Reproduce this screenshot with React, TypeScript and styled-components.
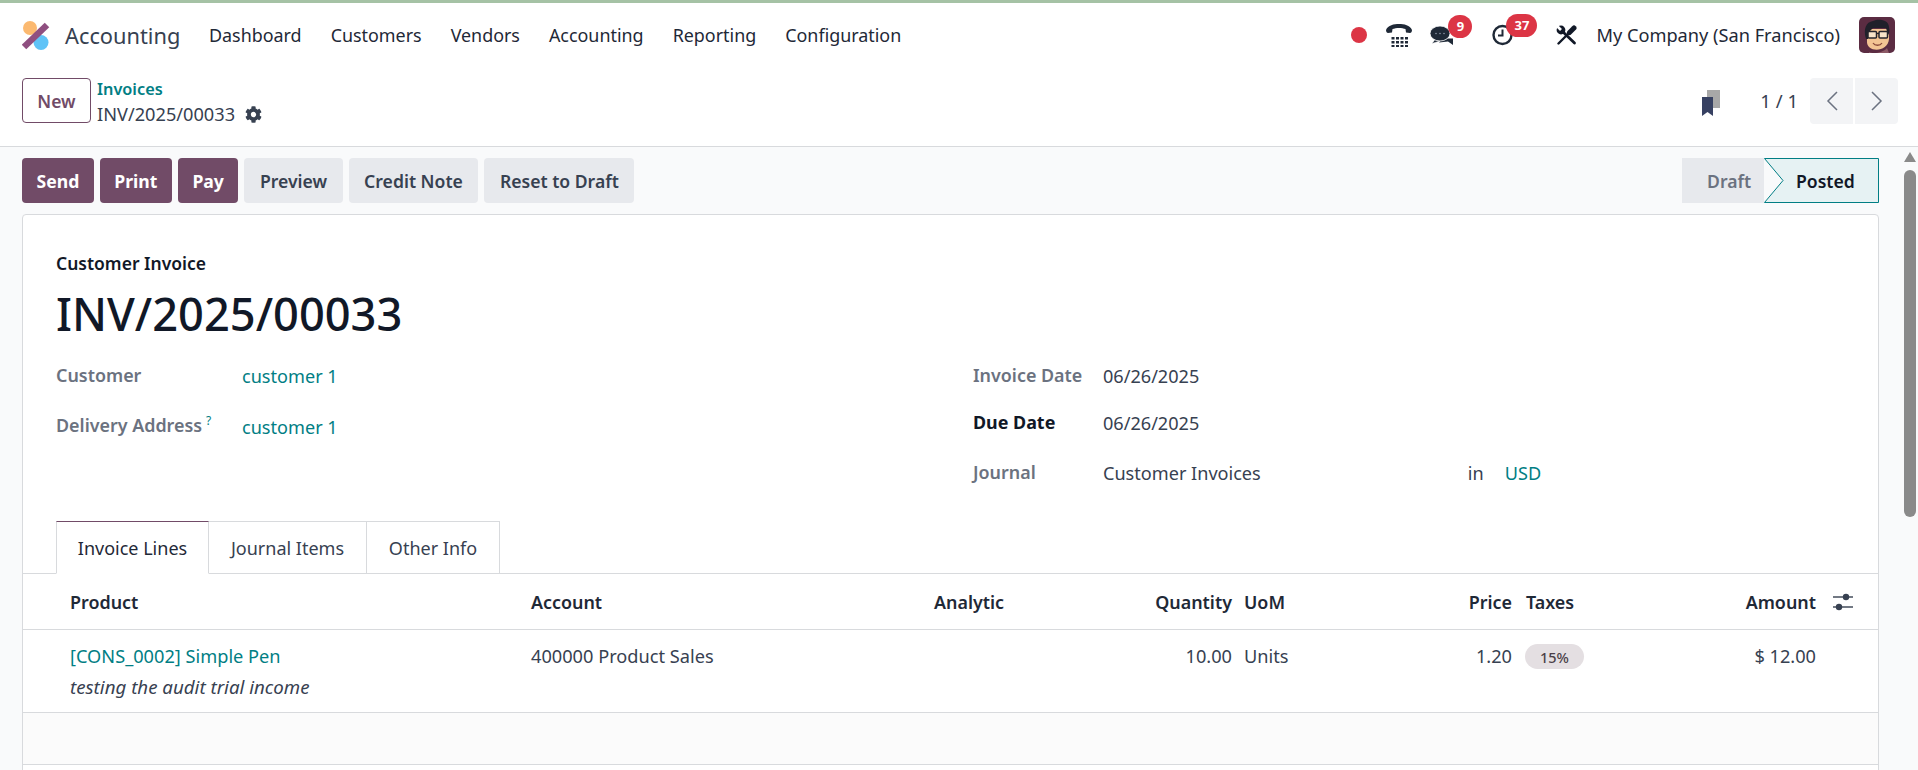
import React from 'react'
import styled, { createGlobalStyle } from 'styled-components'
import { FaCog } from 'react-icons/fa'

const GlobalStyle = createGlobalStyle`
    html, body {
        margin: 0;
        height: 100%;
        overflow: hidden;
        background: #fff;
    }
    body {
        font-family: "Noto Sans", "Open Sans", sans-serif;
        font-size: 18px;
        color: #374151;
    }
    * {
        box-sizing: border-box;
    }
`

const Page = styled.div`
    display: flex;
    flex-direction: column;
    height: 770px;
    overflow: hidden;
    border-top: 3px solid #a5c2a5;
`
const NavBar = styled.header`
    display: flex;
    align-items: center;
    height: 66px;
    flex-shrink: 0;
    padding: 0 23px 2px 22px;
`
const Brand = styled.div`
    display: flex;
    align-items: center;
    gap: 15px;
    width: 187px;
    font-size: 21.8px;
    color: #374151;
`
const NavMenu = styled.nav`
    display: flex;
    gap: 29px;
`
const NavItem = styled.span`
    font-size: 17.9px;
    color: #1f2937;
`
const Systray = styled.div`
    display: flex;
    align-items: center;
    margin-left: auto;
`
const TrayItem = styled.div<{ $left: number, $width: number }>`
    position: relative;
    display: flex;
    align-items: center;
    justify-content: center;
    width: ${(props) => props.$width}px;
    margin-left: ${(props) => props.$left}px;
`
const RecordDot = styled.span`
    width: 16px;
    height: 16px;
    border-radius: 50%;
    background: #dc3545;
`
const Badge = styled.span<{ $left: number, $width: number }>`
    position: absolute;
    top: -10px;
    left: ${(props) => props.$left}px;
    width: ${(props) => props.$width}px;
    height: 23px;
    border-radius: 12px;
    background: #dc3545;
    color: #fff;
    font-size: 13px;
    font-weight: 700;
    line-height: 23px;
    text-align: center;
`
const CompanyName = styled.span`
    margin-left: 19px;
    font-size: 18.2px;
    color: #1f2937;
    white-space: nowrap;
`
const AvatarWrap = styled.div`
    display: flex;
    margin-left: 19px;
`

const ControlPanel = styled.section`
    display: flex;
    justify-content: space-between;
    height: 78px;
    flex-shrink: 0;
    padding: 9px 20px 0 22px;
    border-bottom: 1px solid #d8dadd;
`
const PanelLeft = styled.div`
    display: flex;
    gap: 6px;
`
const NewButton = styled.button`
    width: 69px;
    height: 45px;
    padding: 0;
    border: 1px solid #714b67;
    border-radius: 4px;
    background: #fff;
    color: #714b67;
    font: 600 17.5px "Noto Sans", sans-serif;
`
const Breadcrumb = styled.div`
    display: flex;
    flex-direction: column;
    margin-top: -1px;
    line-height: 25px;
`
const CrumbLink = styled.span`
    color: #017e84;
    font-weight: 600;
    font-size: 16.3px;
`
const CrumbCurrent = styled.span`
    display: flex;
    align-items: center;
    gap: 10px;
    font-size: 18.2px;
    color: #374151;
    svg {
        width: 17px;
        height: 17px;
    }
`
const PanelRight = styled.div`
    display: flex;
    align-items: flex-start;
`
const BookmarkWrap = styled.div`
    display: flex;
    margin: 12px 40px 0 0;
`
const PagerText = styled.span`
    margin-right: 12px;
    line-height: 46px;
    font-size: 18.5px;
`
const PagerButton = styled.button<{ $first?: boolean, $gap?: number }>`
    display: flex;
    align-items: center;
    justify-content: center;
    width: 43px;
    height: 46px;
    margin-left: ${(props) => props.$gap || 0}px;
    padding: 0;
    border: 0;
    background: #f3f4f6;
    border-radius: ${(props) => (props.$first ? '4px 0 0 4px' : '0 4px 4px 0')};
`

const Body = styled.div`
    display: flex;
    flex: 1;
    min-height: 0;
    background: #f9fafb;
`
const Main = styled.main`
    flex: 1;
    min-width: 0;
    padding: 11px 22px 0 22px;
`
const ActionRow = styled.div`
    display: flex;
    justify-content: space-between;
    height: 45px;
    margin-bottom: 11px;
`
const Actions = styled.div`
    display: flex;
    gap: 6px;
`
const ActionButton = styled.button<{ $primary?: boolean }>`
    height: 45px;
    padding: 1px ${(props) => (props.$primary ? 14.5 : 15.5)}px 0;
    border: 0;
    border-radius: 4px;
    background: ${(props) => (props.$primary ? '#714b67' : '#e7e9ed')};
    color: ${(props) => (props.$primary ? '#fff' : '#374151')};
    font: ${(props) => (props.$primary ? 700 : 600)} 17.6px "Noto Sans", sans-serif;
`
const StatusBar = styled.div`
    display: flex;
    height: 45px;
`
const StatusDraft = styled.div`
    width: 82px;
    padding-left: 25px;
    background: #e7e9ed;
    color: #6b7280;
    font-weight: 600;
    font-size: 17.6px;
    line-height: 46px;
`
const StatusPosted = styled.div`
    position: relative;
    width: 115px;
    padding-left: 32px;
    color: #111827;
    font-weight: 600;
    font-size: 17.6px;
    line-height: 46px;
    svg {
        position: absolute;
        left: 0;
        top: 0;
    }
    span {
        position: relative;
    }
`

const Sheet = styled.article`
    background: #fff;
    border: 1px solid #d8dadd;
    border-radius: 4px;
    height: 600px;
`
const SheetHead = styled.div`
    padding: 36px 33px 0;
`
const DocType = styled.div`
    font-size: 17.5px;
    font-weight: 600;
    color: #111827;
    line-height: 24px;
`
const DocTitle = styled.h1`
    margin: 8px 0 0;
    font-size: 45.2px;
    font-weight: 500;
    line-height: 62px;
    color: #111827;
`
const FieldColumns = styled.div`
    display: grid;
    grid-template-columns: 917px 1fr;
    height: 170px;
    margin-top: 6px;
`
const FieldRow = styled.div<{ $height: number }>`
    display: flex;
    align-items: center;
    height: ${(props) => props.$height}px;
    font-size: 18.1px;
`
const FieldLabel = styled.span<{ $width: number, $strong?: boolean, $raised?: boolean }>`
    flex-shrink: 0;
    width: ${(props) => props.$width}px;
    margin-bottom: ${(props) => (props.$raised ? 4 : 0)}px;
    font-size: 17.9px;
    font-weight: ${(props) => (props.$strong ? 700 : 600)};
    color: ${(props) => (props.$strong ? '#111827' : '#6b7280')};
`
const Help = styled.sup`
    margin-left: 4px;
    font-size: 12px;
    font-weight: 400;
    color: #017e84;
`
const FieldValue = styled.span`
    padding-top: 1px;
    color: #374151;
`
const LinkValue = styled(FieldValue)`
    color: #017e84;
`
const InWord = styled(FieldValue)`
    width: 37px;
    margin-left: 207px;
`

const TabRow = styled.div`
    display: flex;
    height: 53px;
    padding-left: 33px;
    border-bottom: 1px solid #d8dadd;
`
const Tab = styled.div<{ $active?: boolean, $width: number }>`
    width: ${(props) => props.$width}px;
    height: 53px;
    border: 1px solid #d8dadd;
    border-left-width: ${(props) => (props.$active ? 1 : 0)}px;
    border-top-color: ${(props) => (props.$active ? '#714b67' : '#d8dadd')};
    border-bottom-color: ${(props) => (props.$active ? '#fff' : '#d8dadd')};
    color: ${(props) => (props.$active ? '#1f2937' : '#374151')};
    line-height: 52px;
    text-align: center;
`

const GRID = '461px 403px 166px 132px 143px 137px 168px 136px 1fr'
const HeaderRow = styled.div`
    display: grid;
    grid-template-columns: ${GRID};
    align-items: center;
    height: 56px;
    padding: 1px 0 0 47px;
    border-bottom: 1px solid #d8dadd;
    font-size: 17.9px;
    font-weight: 600;
    color: #1f2937;
`
const LineRow = styled.div`
    display: grid;
    grid-template-columns: ${GRID};
    height: 83px;
    padding: 14px 0 0 47px;
    border-bottom: 1px solid #d8dadd;
    font-size: 18.2px;
    line-height: 25px;
`
const FillerRow = styled.div`
    height: 52px;
    background: #fbfbfb;
    border-bottom: 1px solid #d8dadd;
`
const Cell = styled.div<{ $right?: boolean, $pad?: number }>`
    text-align: ${(props) => (props.$right ? 'right' : 'left')};
    padding-left: ${(props) => props.$pad || 0}px;
`
const IconCell = styled(Cell)`
    display: flex;
`
const ProductLink = styled.div`
    color: #017e84;
`
const LineNote = styled.div`
    margin-top: 5px;
    font-size: 18.7px;
    font-style: italic;
    color: #374151;
`
const TaxPill = styled.span`
    display: inline-block;
    width: 59px;
    height: 25px;
    margin-top: -1px;
    border-radius: 13px;
    background: #e4dfe2;
    color: #4b3f48;
    font-size: 14.5px;
    font-weight: 500;
    line-height: 27px;
    text-align: center;
`

const ScrollBar = styled.aside`
    display: flex;
    flex-direction: column;
    align-items: center;
    width: 17px;
    padding-top: 5px;
    flex-shrink: 0;
`
const ScrollArrow = styled.span`
    width: 0;
    height: 0;
    border-left: 6px solid transparent;
    border-right: 6px solid transparent;
    border-bottom: 10px solid #8a8a8a;
`
const ScrollThumb = styled.span`
    width: 12px;
    height: 347px;
    margin-top: 8px;
    border-radius: 6px;
    background: #8a8a8a;
`

const Logo = () => (
    <svg width="28" height="30" viewBox="0 0 28 30">
        <circle cx="8" cy="8" r="7" fill="#fbb970" />
        <circle cx="19" cy="22.5" r="7.5" fill="#5fc3f7" />
        <path d="M2 27 L25 5" stroke="#8f4f80" strokeWidth="6.5" />
    </svg>
)
const PhoneIcon = () => (
    <svg width="26" height="23" viewBox="0 0 26 23" fill="#1f2937">
        <path d="M0 6 C2 1 8 0 13 0 C18 0 24 1 26 6 C26 8 25 9 24 9 L20 8.5 L19.5 5 C16 3.5 10 3.5 6.5 5 L6 8.5 L2 9 C1 9 0 8 0 6 Z" />
        {[5.5, 10, 14.5, 19].map((x) => [13, 17, 21].map((y) => (
            <rect key={`${x}-${y}`} x={x} y={y} width="3" height="2.5" />
        )))}
    </svg>
)
const ChatIcon = () => (
    <svg width="26" height="21" viewBox="0 0 24 20">
        <path d="M12 13 L23 13 L23 19.5 L18 16 L9 17 Z" fill="#1f2937" />
        <path d="M5 14 L2 18 L10 15.5 Z" fill="#1f2937" stroke="#fff" strokeWidth="0.5" />
        <ellipse cx="10" cy="8" rx="10" ry="7.5" fill="#1f2937" stroke="#fff" strokeWidth="0.8" />
        <circle cx="6" cy="8" r="0.8" fill="#8b95a5" />
        <circle cx="10" cy="8" r="0.8" fill="#8b95a5" />
        <circle cx="14" cy="8" r="0.8" fill="#8b95a5" />
    </svg>
)
const ClockIcon = () => (
    <svg width="22" height="22" viewBox="0 0 21 21" fill="none" stroke="#1f2937">
        <circle cx="10.5" cy="10.5" r="9" strokeWidth="2.4" />
        <path d="M10.5 5 V11 H6" strokeWidth="2" />
    </svg>
)
const ToolsIcon = () => (
    <svg width="21" height="20" viewBox="0 0 21 20" fill="none" stroke="#111827">
        <path d="M6 6 L18.5 18" strokeWidth="2.8" strokeLinecap="round" />
        <circle cx="5" cy="5" r="4.4" fill="#111827" stroke="none" />
        <path d="M1 1 L5 5" stroke="#fff" strokeWidth="2.6" />
        <path d="M2.5 18.5 L13 8" strokeWidth="2.4" strokeLinecap="round" />
        <path d="M13.5 7.5 L18 3" strokeWidth="5" strokeLinecap="round" />
    </svg>
)
const Avatar = () => (
    <svg width="36" height="36" viewBox="0 0 36 36">
        <rect width="36" height="36" rx="5" fill="#5b2c42" />
        <path d="M8 24 C7 36 29 36 30 22 L30 12 L8 12 Z" fill="#f3c493" />
        <path d="M10 35 C14 37 24 36 28 31 L30 36 L10 36 Z" fill="#8d5a66" />
        <path d="M7 22 C4 12 7 5 14 4 C20 1 30 3 30 10 C31 14 30 17 29 18 L27 11 L14 11 L10 15 L9 22 Z" fill="#20202a" />
        <rect x="9" y="14.5" width="8.5" height="6.5" rx="1" fill="#f7e3c9" stroke="#24242c" strokeWidth="1.5" />
        <rect x="20" y="14.5" width="8.5" height="6.5" rx="1" fill="#f7e3c9" stroke="#24242c" strokeWidth="1.5" />
        <path d="M17 16.5 H20" stroke="#24242c" strokeWidth="1.2" />
        <path d="M14 26 C16 29 21 29 23 26" fill="none" stroke="#8a4a3a" strokeWidth="1.3" />
    </svg>
)
const BookmarkIcon = () => (
    <svg width="18" height="26" viewBox="0 0 18 26">
        <path d="M5 0 H18 V18 H5 Z" fill="#a8a8a8" />
        <path d="M0 7 H11 V26 L5.5 22 L0 26 Z" fill="#374162" />
    </svg>
)
const Chevron = ({ left }: { left?: boolean }) => (
    <svg width="12" height="20" viewBox="0 0 12 20" fill="none" stroke="#6b7280" strokeWidth="1.5">
        <path d={left ? 'M11 1 L2 10 L11 19' : 'M1 1 L10 10 L1 19'} />
    </svg>
)
const SlidersIcon = () => (
    <svg width="20" height="18" viewBox="0 0 20 18" fill="#374151">
        <rect x="0" y="3.3" width="20" height="1.4" />
        <rect x="0" y="13.3" width="20" height="1.4" />
        <circle cx="13" cy="4" r="3.2" />
        <circle cx="6" cy="14" r="3.2" />
    </svg>
)

const menu = ['Dashboard', 'Customers', 'Vendors', 'Accounting', 'Reporting', 'Configuration']
const actions = [
    { label: 'Send', primary: true },
    { label: 'Print', primary: true },
    { label: 'Pay', primary: true },
    { label: 'Preview' },
    { label: 'Credit Note' },
    { label: 'Reset to Draft' },
]

export default function App() {
    return (
        <Page>
            <GlobalStyle />
            <NavBar>
                <Brand>
                    <Logo />
                    Accounting
                </Brand>
                <NavMenu>
                    {menu.map((item) => <NavItem key={item}>{item}</NavItem>)}
                </NavMenu>
                <Systray>
                    <TrayItem $left={0} $width={16}><RecordDot /></TrayItem>
                    <TrayItem $left={19} $width={26}><PhoneIcon /></TrayItem>
                    <TrayItem $left={18} $width={24}>
                        <ChatIcon />
                        <Badge $left={18} $width={24}>9</Badge>
                    </TrayItem>
                    <TrayItem $left={38} $width={21}>
                        <ClockIcon />
                        <Badge $left={14} $width={31}>37</Badge>
                    </TrayItem>
                    <TrayItem $left={43} $width={21}><ToolsIcon /></TrayItem>
                    <CompanyName>My Company (San Francisco)</CompanyName>
                    <AvatarWrap><Avatar /></AvatarWrap>
                </Systray>
            </NavBar>
            <ControlPanel>
                <PanelLeft>
                    <NewButton>New</NewButton>
                    <Breadcrumb>
                        <CrumbLink>Invoices</CrumbLink>
                        <CrumbCurrent>INV/2025/00033 <FaCog /></CrumbCurrent>
                    </Breadcrumb>
                </PanelLeft>
                <PanelRight>
                    <BookmarkWrap><BookmarkIcon /></BookmarkWrap>
                    <PagerText>1 / 1</PagerText>
                    <PagerButton $first><Chevron left /></PagerButton>
                    <PagerButton $gap={2}><Chevron /></PagerButton>
                </PanelRight>
            </ControlPanel>
            <Body>
                <Main>
                    <ActionRow>
                        <Actions>
                            {actions.map((a) => (
                                <ActionButton key={a.label} $primary={a.primary}>{a.label}</ActionButton>
                            ))}
                        </Actions>
                        <StatusBar>
                            <StatusDraft>Draft</StatusDraft>
                            <StatusPosted>
                                <svg width="115" height="45" viewBox="0 0 115 45">
                                    <path d="M0.5 0.5 H114.5 V44.5 H0.5 L19 22.5 Z" fill="#e6f2f3" stroke="#017e84" />
                                </svg>
                                <span>Posted</span>
                            </StatusPosted>
                        </StatusBar>
                    </ActionRow>
                    <Sheet>
                        <SheetHead>
                            <DocType>Customer Invoice</DocType>
                            <DocTitle>INV/2025/00033</DocTitle>
                            <FieldColumns>
                                <div>
                                    <FieldRow $height={48}>
                                        <FieldLabel $width={186}>Customer</FieldLabel>
                                        <LinkValue>customer 1</LinkValue>
                                    </FieldRow>
                                    <FieldRow $height={54}>
                                        <FieldLabel $width={186} $raised>Delivery Address<Help>?</Help></FieldLabel>
                                        <LinkValue>customer 1</LinkValue>
                                    </FieldRow>
                                </div>
                                <div>
                                    <FieldRow $height={48}>
                                        <FieldLabel $width={130}>Invoice Date</FieldLabel>
                                        <FieldValue>06/26/2025</FieldValue>
                                    </FieldRow>
                                    <FieldRow $height={46}>
                                        <FieldLabel $width={130} $strong>Due Date</FieldLabel>
                                        <FieldValue>06/26/2025</FieldValue>
                                    </FieldRow>
                                    <FieldRow $height={54}>
                                        <FieldLabel $width={130}>Journal</FieldLabel>
                                        <FieldValue>Customer Invoices</FieldValue>
                                        <InWord>in</InWord>
                                        <LinkValue>USD</LinkValue>
                                    </FieldRow>
                                </div>
                            </FieldColumns>
                        </SheetHead>
                        <TabRow>
                            <Tab $active $width={153}>Invoice Lines</Tab>
                            <Tab $width={158}>Journal Items</Tab>
                            <Tab $width={133}>Other Info</Tab>
                        </TabRow>
                        <HeaderRow>
                            <Cell>Product</Cell>
                            <Cell>Account</Cell>
                            <Cell>Analytic</Cell>
                            <Cell $right>Quantity</Cell>
                            <Cell $pad={12}>UoM</Cell>
                            <Cell $right>Price</Cell>
                            <Cell $pad={14}>Taxes</Cell>
                            <Cell $right>Amount</Cell>
                            <IconCell $pad={17}><SlidersIcon /></IconCell>
                        </HeaderRow>
                        <LineRow>
                            <Cell>
                                <ProductLink>[CONS_0002] Simple Pen</ProductLink>
                                <LineNote>testing the audit trial income</LineNote>
                            </Cell>
                            <Cell>400000 Product Sales</Cell>
                            <Cell />
                            <Cell $right>10.00</Cell>
                            <Cell $pad={12}>Units</Cell>
                            <Cell $right>1.20</Cell>
                            <Cell $pad={13}><TaxPill>15%</TaxPill></Cell>
                            <Cell $right>$ 12.00</Cell>
                            <Cell />
                        </LineRow>
                        <FillerRow />
                    </Sheet>
                </Main>
                <ScrollBar>
                    <ScrollArrow />
                    <ScrollThumb />
                </ScrollBar>
            </Body>
        </Page>
    )
}
